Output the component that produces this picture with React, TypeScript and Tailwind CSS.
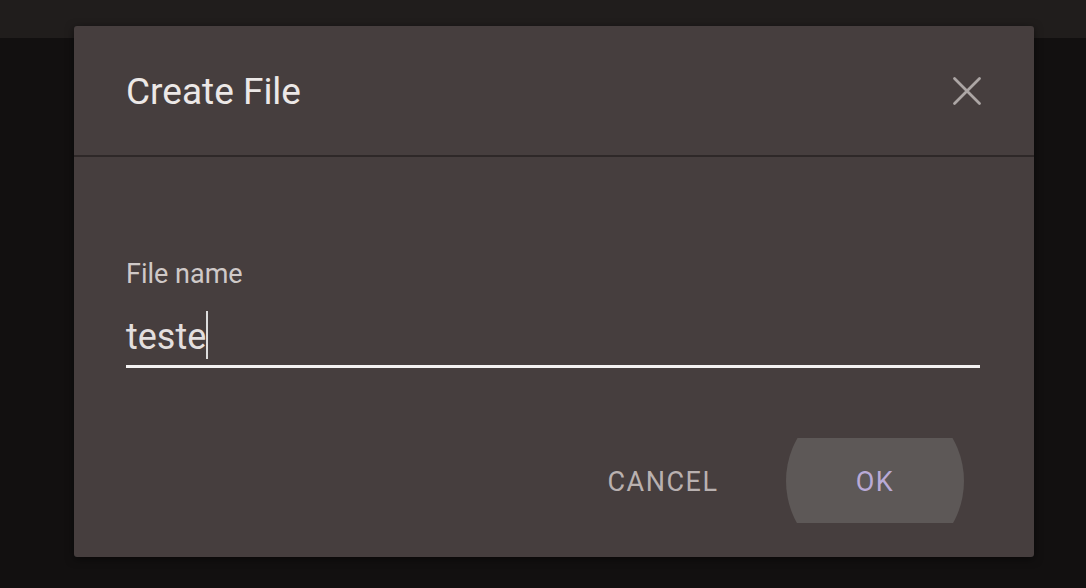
import React from 'react'

const font = { fontFamily: 'Roboto, "Liberation Sans", sans-serif' }

function CloseIcon() {
  return (
    <svg width="30" height="30" viewBox="0 0 30 30" fill="none">
      <path d="M2.5 2.5 L27.5 27.5 M27.5 2.5 L2.5 27.5" stroke="#aca6a5" strokeWidth="2.8" strokeLinecap="round" />
    </svg>
  )
}

export default function App() {
  return (
    <div className="w-[1086px] h-[588px] bg-[#121010] flex flex-col overflow-hidden" style={font}>
      <div className="h-[38px] shrink-0 bg-[#201d1c]" />
      <div className="-mt-[12px] ml-[74px] w-[960px] h-[531px] rounded-[3px] bg-[#463e3e] flex flex-col shadow-[0_2px_8px_rgba(0,0,0,0.5)]">
        <div className="h-[131px] shrink-0 flex items-center justify-between pl-[52px] pr-[52px] border-b-2 border-[#2e2828]">
          <div className="text-[37px] leading-[44px] text-[#ece8e7] pt-[3px]">Create File</div>
          <CloseIcon />
        </div>
        <div className="flex-1 flex flex-col pl-[52px] pr-[54px] pt-[101px]">
          <label className="text-[27px] leading-[32px] text-[#cfc9c8]">File name</label>
          <div className="mt-[27px] flex items-end border-b-[3px] border-[#f4f2f2] pb-[8px]">
            <span className="text-[36px] leading-[40px] text-[#e3dfde]">teste</span>
            <span className="w-[2px] h-[48px] -mt-[6px] -mb-[2px] bg-[#ddd]" />
          </div>
          <div className="flex-1" />
          <div className="flex justify-end items-center gap-[34px] pr-[16px] pb-[34px]">
            <div className="w-[178px] h-[85px] pt-[4px] flex items-center justify-center text-[27px] tracking-[1.5px] text-[#b9b1b0]">CANCEL</div>
            <div className="w-[178px] h-[85px] overflow-hidden flex items-center">
              <div className="w-[178px] h-[172px] pt-[4px] shrink-0 rounded-[86px] bg-[#5d5857] flex items-center justify-center text-[27px] tracking-[1.5px] text-[#b9aad6]">OK</div>
            </div>
          </div>
        </div>
      </div>
    </div>
  )
}
